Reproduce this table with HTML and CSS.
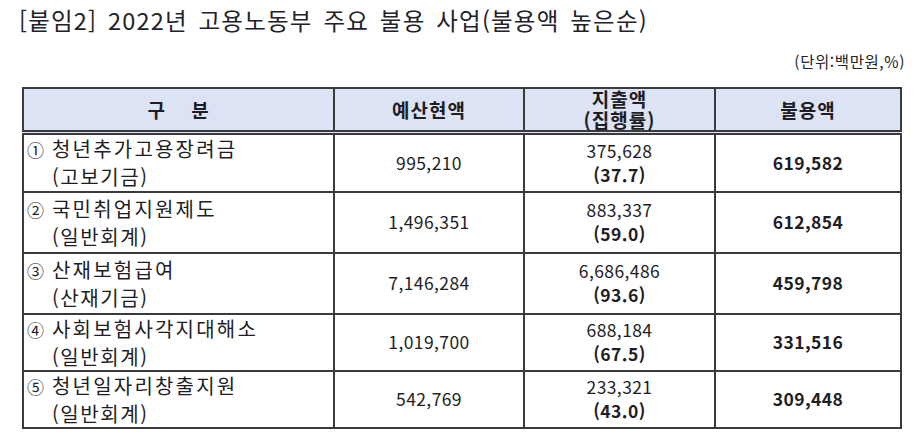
FILE: index.html
```html
<!DOCTYPE html>
<html lang="ko">
<head>
<meta charset="utf-8">
<link rel="stylesheet" href="styles.css">
</head>
<body>
<div class="page">
  <h1 class="title">[붙임2] 2022년 고용노동부 주요 불용 사업(불용액 높은순)</h1>
  <div class="unit">(단위:백만원,%)</div>
  <table class="data">
    <colgroup>
      <col class="c1"><col class="c2"><col class="c3"><col class="c4">
    </colgroup>
    <thead>
      <tr>
        <th class="h-gubun">구&nbsp;&nbsp;&nbsp;&nbsp;분</th>
        <th>예산현액</th>
        <th><div class="hl">지출액</div><div class="hl">(집행률)</div></th>
        <th>불용액</th>
      </tr>
    </thead>
    <tbody>
      <tr class="tall">
        <td class="name"><div class="n1"><span class="num">①</span>청년추가고용장려금</div><div class="n2">(고보기금)</div></td>
        <td class="val">995,210</td>
        <td class="val"><div class="l1">375,628</div><div class="l2">(37.7)</div></td>
        <td class="val strong">619,582</td>
      </tr>
      <tr class="tall2">
        <td class="name"><div class="n1"><span class="num">②</span>국민취업지원제도</div><div class="n2">(일반회계)</div></td>
        <td class="val">1,496,351</td>
        <td class="val"><div class="l1">883,337</div><div class="l2">(59.0)</div></td>
        <td class="val strong">612,854</td>
      </tr>
      <tr class="tall2">
        <td class="name"><div class="n1"><span class="num">③</span>산재보험급여</div><div class="n2">(산재기금)</div></td>
        <td class="val">7,146,284</td>
        <td class="val"><div class="l1">6,686,486</div><div class="l2">(93.6)</div></td>
        <td class="val strong">459,798</td>
      </tr>
      <tr class="short">
        <td class="name"><div class="n1"><span class="num">④</span>사회보험사각지대해소</div><div class="n2">(일반회계)</div></td>
        <td class="val">1,019,700</td>
        <td class="val"><div class="l1">688,184</div><div class="l2">(67.5)</div></td>
        <td class="val strong">331,516</td>
      </tr>
      <tr class="short2">
        <td class="name"><div class="n1"><span class="num">⑤</span>청년일자리창출지원</div><div class="n2">(일반회계)</div></td>
        <td class="val">542,769</td>
        <td class="val"><div class="l1">233,321</div><div class="l2">(43.0)</div></td>
        <td class="val strong">309,448</td>
      </tr>
    </tbody>
  </table>
</div>
</body>
</html>
```

FILE: styles.css
```css
html, body {
  margin: 0;
  padding: 0;
  background: #ffffff;
}
body {
  font-family: "Noto Sans CJK KR", "Noto Sans", sans-serif;
  color: #1e1e24;
}
.page {
  width: 921px;
}
.title {
  margin: 0;
  padding: 5px 0 0 19px;
  height: 35px;
  font-size: 23.5px;
  font-weight: 400;
  line-height: 30px;
  letter-spacing: 1.2px;
  word-spacing: 3px;
  color: #222228;
  white-space: nowrap;
}
.unit {
  text-align: right;
  padding-right: 16px;
  font-size: 15.5px;
  line-height: 20px;
  height: 20px;
  margin-top: 11px;
  letter-spacing: 0.6px;
  color: #222228;
}
.data {
  margin: 16px 0 0 22px;
  border-collapse: collapse;
  width: 878px;
  table-layout: fixed;
}
.c1 { width: 311px; }
.c2 { width: 190px; }
.c3 { width: 191px; }
.c4 { width: 186px; }
.data th, .data td {
  border: 2px solid #3a3a3a;
  padding: 0;
}
.data th {
  background: #dce3f4;
  height: 37px;
  font-size: 19px;
  font-weight: 700;
  line-height: 20px;
  text-align: center;
  vertical-align: middle;
  border-bottom: 5px double #3a3a3a;
  letter-spacing: 1px;
}
.data th .hl {
  line-height: 20.5px;
}
.h-gubun {
  white-space: pre;
}
.tall { height: 59px; }
.tall2 { height: 61px; }
.short { height: 55px; }
.short2 { height: 56px; }
.name {
  padding: 0 0 0 3px !important;
  vertical-align: middle;
  font-size: 20px;
  line-height: 27px;
}
.n1 {
  letter-spacing: 2.2px;
  white-space: nowrap;
}
.num {
  display: inline-block;
  width: 25px;
  letter-spacing: 0;
  font-size: 17px;
}
.n2 {
  padding-left: 25px;
  letter-spacing: 1.6px;
}
.val {
  text-align: center;
  vertical-align: middle;
  font-size: 17.5px;
  letter-spacing: 0.4px;
  line-height: 24px;
}
.l2 {
  font-weight: 700;
}
.strong {
  font-weight: 700;
}
```
